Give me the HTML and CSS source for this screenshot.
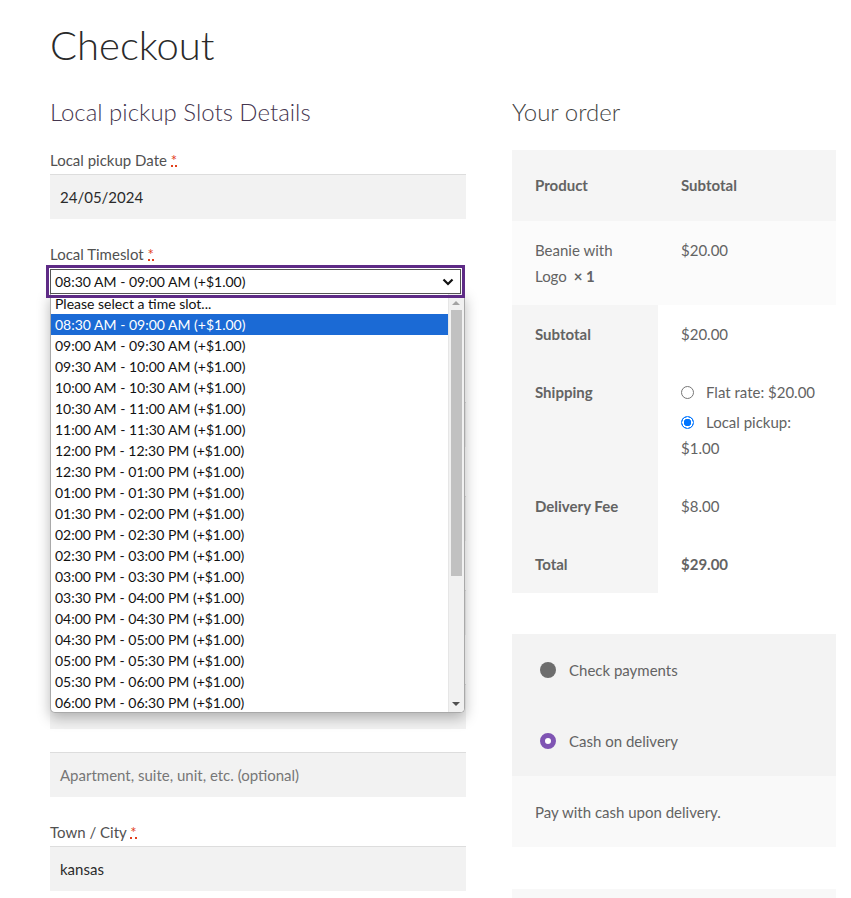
FILE: index.html
```html
<!DOCTYPE html>
<html lang="en">
  <head>
    <meta charset="UTF-8" />
    <meta name="viewport" content="width=device-width, initial-scale=1.0" />
    <title>Checkout</title>
    <link rel="stylesheet" href="styles.css">
  </head>

  <body>
    <div class="page">
      <h1 class="title">Checkout</h1>

      <div class="checkout">
        <div class="col-left">
          <h3 class="section-title slots">Local pickup Slots Details</h3>

          <div class="field">
            <label>Local pickup Date <abbr class="req">*</abbr></label>
            <div class="input">24/05/2024</div>
          </div>

          <div class="field timeslot-field">
            <label>Local Timeslot <abbr class="req">*</abbr></label>
            <div class="select">
              <span>08:30 AM - 09:00 AM (+$1.00)</span>
              <svg class="chevron" width="12" height="8" viewBox="0 0 12 8">
                <path d="M1.5 1.5 L6 6 L10.5 1.5" fill="none" stroke="#111" stroke-width="2.2" />
              </svg>
            </div>

            <div class="dropdown">
              <div class="options">
                <div class="option">Please select a time slot...</div>
                <div class="option selected">08:30 AM - 09:00 AM (+$1.00)</div>
                <div class="option">09:00 AM - 09:30 AM (+$1.00)</div>
                <div class="option">09:30 AM - 10:00 AM (+$1.00)</div>
                <div class="option">10:00 AM - 10:30 AM (+$1.00)</div>
                <div class="option">10:30 AM - 11:00 AM (+$1.00)</div>
                <div class="option">11:00 AM - 11:30 AM (+$1.00)</div>
                <div class="option">12:00 PM - 12:30 PM (+$1.00)</div>
                <div class="option">12:30 PM - 01:00 PM (+$1.00)</div>
                <div class="option">01:00 PM - 01:30 PM (+$1.00)</div>
                <div class="option">01:30 PM - 02:00 PM (+$1.00)</div>
                <div class="option">02:00 PM - 02:30 PM (+$1.00)</div>
                <div class="option">02:30 PM - 03:00 PM (+$1.00)</div>
                <div class="option">03:00 PM - 03:30 PM (+$1.00)</div>
                <div class="option">03:30 PM - 04:00 PM (+$1.00)</div>
                <div class="option">04:00 PM - 04:30 PM (+$1.00)</div>
                <div class="option">04:30 PM - 05:00 PM (+$1.00)</div>
                <div class="option">05:00 PM - 05:30 PM (+$1.00)</div>
                <div class="option">05:30 PM - 06:00 PM (+$1.00)</div>
                <div class="option">06:00 PM - 06:30 PM (+$1.00)</div>
              </div>
              <div class="scrollbar">
                <span class="arrow up"></span>
                <span class="thumb"></span>
                <span class="arrow down"></span>
              </div>
            </div>
          </div>

          <!-- billing fields sitting under the open list -->
          <div class="field covered">
            <label></label>
            <div class="input"></div>
          </div>
          <div class="field covered">
            <label></label>
            <div class="input"></div>
          </div>
          <div class="field covered">
            <label></label>
            <div class="input"></div>
          </div>

          <div class="field street">
            <label></label>
            <div class="input"></div>
            <div class="input placeholder">Apartment, suite, unit, etc. (optional)</div>
          </div>

          <div class="field">
            <label>Town / City <abbr class="req">*</abbr></label>
            <div class="input">kansas</div>
          </div>
        </div>

        <div class="col-right">
          <h3 class="section-title">Your order</h3>

          <table class="order">
            <colgroup>
              <col class="first">
              <col>
            </colgroup>
            <thead>
              <tr>
                <th>Product</th>
                <th>Subtotal</th>
              </tr>
            </thead>
            <tbody>
              <tr class="item">
                <td>Beanie with Logo <strong class="qty">× 1</strong></td>
                <td>$20.00</td>
              </tr>
            </tbody>
            <tfoot>
              <tr>
                <th>Subtotal</th>
                <td>$20.00</td>
              </tr>
              <tr>
                <th>Shipping</th>
                <td class="shipping">
                  <ul class="methods">
                    <li><span class="radio"></span>Flat rate: $20.00</li>
                    <li><span class="radio checked"></span>Local pickup: $1.00</li>
                  </ul>
                </td>
              </tr>
              <tr>
                <th>Delivery Fee</th>
                <td>$8.00</td>
              </tr>
              <tr>
                <th>Total</th>
                <td><strong>$29.00</strong></td>
              </tr>
            </tfoot>
          </table>

          <div class="payment">
            <ul class="pay-methods">
              <li><span class="dot"></span>Check payments</li>
              <li><span class="dot active"></span>Cash on delivery</li>
            </ul>
            <div class="pay-box">Pay with cash upon delivery.</div>
          </div>

          <div class="place-order"></div>
        </div>
      </div>
    </div>
  </body>
</html>
```

FILE: styles.css
```css
body {
  margin: 0;
  background: #fff;
  font-family: "Lato", "Liberation Sans", sans-serif;
  font-size: 15px;
  color: #515151;
}

.page {
  padding: 21px 15px 0 50px;
}

.title {
  margin: 0 0 27px;
  font-size: 40px;
  line-height: 48px;
  font-weight: 300;
  color: #2a2a2a;
}

.checkout {
  display: grid;
  grid-template-columns: 416px 324px;
  gap: 46px;
}

.section-title {
  margin: 0 0 21px;
  font-size: 24px;
  line-height: 31px;
  font-weight: 300;
  color: #444;
}

.section-title.slots {
  color: #45364f;
}

.col-right .section-title {
  margin-bottom: 23px;
}

/* form */

.field {
  margin-bottom: 23px;
}

.field label {
  display: block;
  height: 24px;
  line-height: 24px;
  margin-bottom: 2px;
  color: #515151;
}

.req {
  color: #e2401c;
  text-decoration: none;
  border-bottom: 2px dotted #e2401c;
  line-height: 10px;
  display: inline-block;
}

.input {
  height: 45px;
  box-sizing: border-box;
  padding: 0 10px;
  display: flex;
  align-items: center;
  background: #f2f2f2;
  border-top: 1px solid #ddd;
  color: #2b2b2b;
}

.input.placeholder {
  color: #777;
}

.street .input + .input {
  margin-top: 23px;
}

.timeslot-field {
  position: relative;
  margin-bottom: 82px;
}

.select {
  position: relative;
  z-index: 6;
  width: 411px;
  height: 25px;
  box-sizing: border-box;
  margin-top: 3px;
  padding: 0 6px 0 4px;
  display: flex;
  align-items: center;
  justify-content: space-between;
  background: #fff;
  border: 1px solid #555;
  outline: 3px solid #5e2b86;
  outline-offset: 1px;
  font-size: 14px;
  color: #111;
}

.chevron {
  display: block;
}

/* open list of the select */

.dropdown {
  position: absolute;
  top: 100%;
  left: 0;
  margin-top: -1px;
  width: 415px;
  height: 420px;
  box-sizing: border-box;
  background: #fff;
  border: 1px solid #a9a9a9;
  border-top: none;
  border-radius: 0 0 5px 5px;
  box-shadow: 0 5px 14px rgba(0, 0, 0, 0.28);
  display: flex;
  overflow: hidden;
  z-index: 5;
}

.options {
  flex: 1;
}

.option {
  height: 21px;
  line-height: 21px;
  padding-left: 4px;
  font-size: 14px;
  color: #111;
  white-space: nowrap;
}

.option.selected {
  background: #1b6ad5;
  color: #fff;
}

.scrollbar {
  position: relative;
  width: 15px;
  background: #f1f1f1;
  border-left: 1px solid #e6e6e6;
}

.thumb {
  position: absolute;
  left: 2px;
  right: 2px;
  top: 17px;
  height: 266px;
  background: #c1c1c1;
}

.arrow {
  position: absolute;
  left: 3px;
  width: 0;
  height: 0;
  border-left: 4px solid transparent;
  border-right: 4px solid transparent;
}

.arrow.up {
  top: 8px;
  border-bottom: 4px solid #a3a3a3;
}

.arrow.down {
  bottom: 6px;
  border-top: 4px solid #505050;
}

/* order review */

.order {
  width: 100%;
  border-collapse: collapse;
  table-layout: fixed;
}

.order col.first {
  width: 146px;
}

.order th,
.order td {
  text-align: left;
  vertical-align: top;
  padding: 16px 23px;
  line-height: 26px;
  color: #636363;
}

.order th {
  font-weight: 700;
  background: #f5f5f5;
}

.order td {
  background: #fff;
}

.order td.shipping {
  padding-right: 10px;
}

.order thead th {
  padding: 22px 23px 23px;
}

.order .item td {
  background: #fbfbfb;
}

.order strong {
  font-weight: 700;
}

.qty {
  margin-left: 3px;
}

.methods {
  list-style: none;
  margin: 0;
  padding: 0;
}

.methods li + li {
  margin-top: 4px;
}

.radio {
  display: inline-block;
  width: 11px;
  height: 11px;
  margin: 0 12px 0 0;
  vertical-align: -1px;
  border: 1px solid #767676;
  border-radius: 50%;
  background: #fff;
}

.radio.checked {
  border-color: #0075ff;
  background: radial-gradient(circle, #0075ff 0 3.5px, #fff 4px 5px, #0075ff 5.5px);
}

.payment {
  margin-top: 41px;
}

.pay-methods {
  list-style: none;
  margin: 0;
  padding: 0;
  background: #f3f3f3;
}

.pay-methods li {
  display: flex;
  align-items: center;
  height: 71px;
  padding-left: 28px;
  color: #636363;
}

.dot {
  width: 16px;
  height: 16px;
  margin-right: 13px;
  border-radius: 50%;
  background: #6d6d6d;
}

.dot.active {
  box-sizing: border-box;
  background: #fff;
  border: 5px solid #7f54b3;
}

.pay-box {
  height: 71px;
  display: flex;
  align-items: center;
  padding: 0 23px;
  background: #f9f9f9;
  color: #636363;
}

.place-order {
  margin-top: 42px;
  height: 9px;
  background: #f8f8f8;
}
```
